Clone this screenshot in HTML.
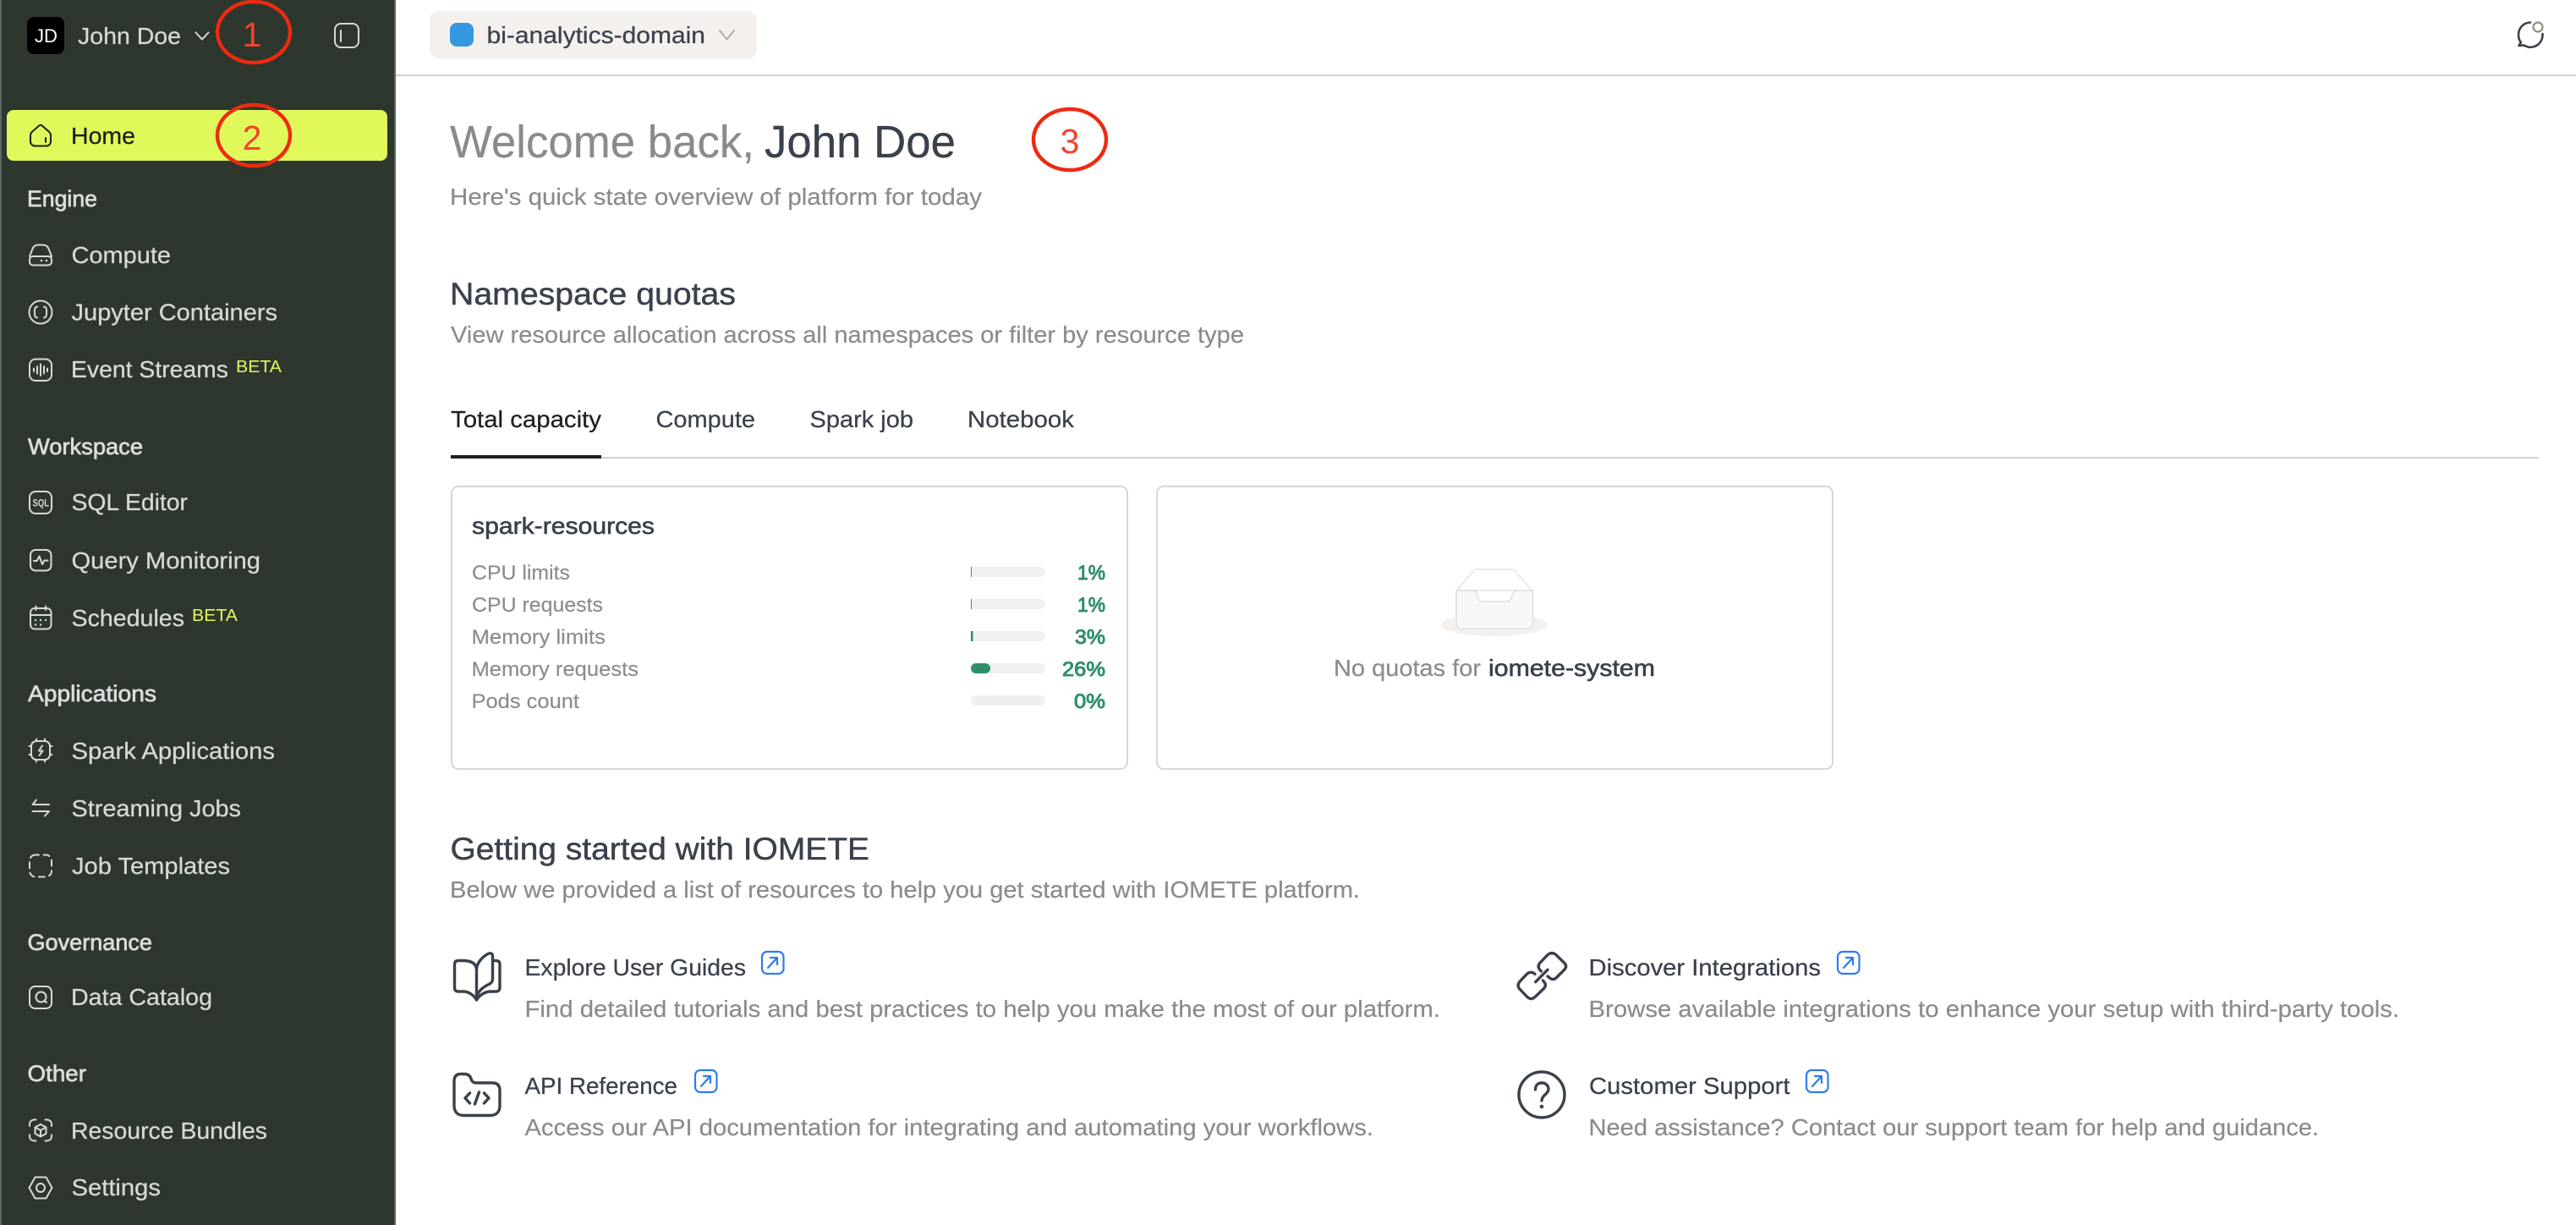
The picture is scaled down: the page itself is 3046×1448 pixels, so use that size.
<!DOCTYPE html>
<html lang="en">
<head>
<meta charset="utf-8">
<title>IOMETE Home</title>
<style>
html,body{margin:0;padding:0;background:#fff;width:3046px;height:1448px;overflow:hidden}
svg{display:block}
text{font-family:"Liberation Sans",sans-serif;white-space:pre}
.nav{font-size:28px;fill:#d9d9d9;stroke:#d9d9d9;stroke-width:.25px}
.sec{font-size:26.500px;fill:#dcdcdc;stroke:#dcdcdc;stroke-width:.7px}
.beta{font-size:20px;fill:#e1f85b}
.g{font-size:28px;fill:#8b8b8b;stroke:#8b8b8b;stroke-width:.2px}
.d{font-size:28px;fill:#3a414c;stroke:#3a414c;stroke-width:.25px}
.row{font-size:24.500px;fill:#8b8b8b;stroke:#8b8b8b;stroke-width:.15px}
.pct{font-size:24.500px;fill:#2f8f6b;stroke:#2f8f6b;stroke-width:1px}
.h2{font-size:37px;fill:#3a414c;stroke:#3a414c;stroke-width:.45px}
.ann{font-size:41px;fill:#f4432c;text-anchor:middle}
.ic{fill:none;stroke:#d9d9d9;stroke-width:2;stroke-linecap:round;stroke-linejoin:round}
.big{fill:none;stroke:#3a414c;stroke-width:3.400;stroke-linecap:round;stroke-linejoin:round}
.ext{fill:none;stroke:#2f7bf0;stroke-width:2.200;stroke-linecap:round;stroke-linejoin:round}
.circ{fill:none;stroke:#ee2a12;stroke-width:4.400}
</style>
</head>
<body>
<svg xmlns="http://www.w3.org/2000/svg" width="3046" height="1448" viewBox="0 0 3046 1448">
<rect width="3046" height="1448" fill="#ffffff"/>

<!-- sidebar -->
<rect x="0" y="0" width="468" height="1448" fill="#5a6a60"/>
<rect x="2" y="0" width="464" height="1448" fill="#2e372d"/>

<!-- top / divider -->
<rect x="468" y="88" width="2578" height="2" fill="#d0d0d0"/>

<!-- user -->
<rect x="32" y="20" width="44" height="44" rx="8" fill="#000"/>
<text x="41" y="50" font-size="22" fill="#fff" textLength="27" lengthAdjust="spacingAndGlyphs">JD</text>
<text x="92" y="52" class="nav" textLength="122" lengthAdjust="spacingAndGlyphs">John Doe</text>
<path class="ic" d="M231.500 38.500 L239 46.500 L246.500 38.500"/>
<rect class="ic" x="396" y="28" width="28" height="28" rx="7"/>
<path class="ic" d="M403 36 V49"/>

<!-- home -->
<rect x="8" y="130" width="450" height="60" rx="8" fill="#e1f85b"/>
<path fill="none" stroke="#1c1f1c" stroke-width="2" stroke-linecap="round" stroke-linejoin="round" d="M36 160 C36 158 37 156.500 38.500 155.200 L46 148.800 C47.200 147.800 48.800 147.800 50 148.800 L57.500 155.200 C59 156.500 60 158 60 160 V167 C60 170.300 57.800 172.500 54.500 172.500 H41.500 C38.200 172.500 36 170.300 36 167 Z"/>
<path fill="none" stroke="#1c1f1c" stroke-width="2" stroke-linecap="round" d="M54 163 V168"/>
<text x="84" y="170" font-size="28" fill="#1c1f1c" stroke="#1c1f1c" stroke-width=".25" textLength="76" lengthAdjust="spacingAndGlyphs">Home</text>

<!-- engine -->
<text x="32" y="244" class="sec" textLength="83" lengthAdjust="spacingAndGlyphs">Engine</text>
<path class="ic" d="M35 303 L38.500 294 C39.800 291 42 289.500 45 289.500 H51 C54 289.500 56.200 291 57.500 294 L61 303"/>
<rect class="ic" x="35" y="303" width="26" height="10.500" rx="4"/>
<circle cx="49" cy="308" r="1.300" fill="#d9d9d9"/><circle cx="55" cy="308" r="1.300" fill="#d9d9d9"/>
<text x="84.500" y="311" class="nav" textLength="117.500" lengthAdjust="spacingAndGlyphs">Compute</text>

<circle class="ic" cx="48" cy="369" r="13.500"/>
<path class="ic" d="M44 362.500 C41 363 41 365 41 369 C41 373 41 375 44 375.500 M52 362.500 C55 363 55 365 55 369 C55 373 55 375 52 375.500"/>
<text x="84.500" y="378.500" class="nav" textLength="243.500" lengthAdjust="spacingAndGlyphs">Jupyter Containers</text>

<rect class="ic" x="35" y="424.500" width="26" height="25.500" rx="7"/>
<path class="ic" d="M40 435.500 V439 M44 433 V441.500 M48 430.500 V444 M52 433 V441.500 M56 435.500 V439"/>
<text x="84" y="446" class="nav" textLength="186" lengthAdjust="spacingAndGlyphs">Event Streams</text>
<text x="279" y="440" class="beta" textLength="54" lengthAdjust="spacingAndGlyphs">BETA</text>

<!-- workspace -->
<text x="33" y="537" class="sec" textLength="136" lengthAdjust="spacingAndGlyphs">Workspace</text>
<rect class="ic" x="35" y="581" width="26" height="26" rx="7"/>
<text x="38.500" y="598.500" font-size="12" font-weight="bold" fill="#d9d9d9" textLength="19.500" lengthAdjust="spacingAndGlyphs">SQL</text>
<text x="84.500" y="603" class="nav" textLength="137.500" lengthAdjust="spacingAndGlyphs">SQL Editor</text>

<rect class="ic" x="36" y="650" width="24.500" height="24.500" rx="6"/>
<path class="ic" d="M40 663 H43.500 L46.500 657.500 L50 667 L52.500 662.500 H56.500"/>
<text x="84.500" y="672" class="nav" textLength="223.500" lengthAdjust="spacingAndGlyphs">Query Monitoring</text>

<rect class="ic" x="36" y="719" width="24.500" height="24.500" rx="5"/>
<path class="ic" d="M42.500 716.500 V721 M54 716.500 V721 M36 727 H60"/>
<circle cx="42" cy="733" r="1.200" fill="#d9d9d9"/><circle cx="48" cy="733" r="1.200" fill="#d9d9d9"/><circle cx="54" cy="733" r="1.200" fill="#d9d9d9"/>
<circle cx="42" cy="738.500" r="1.200" fill="#d9d9d9"/><circle cx="48" cy="738.500" r="1.200" fill="#d9d9d9"/>
<text x="84.500" y="740" class="nav" textLength="133.500" lengthAdjust="spacingAndGlyphs">Schedules</text>
<text x="227" y="734" class="beta" textLength="54" lengthAdjust="spacingAndGlyphs">BETA</text>

<!-- applications -->
<text x="33" y="829" class="sec" textLength="152" lengthAdjust="spacingAndGlyphs">Applications</text>
<rect class="ic" x="37" y="876" width="22" height="22" rx="6"/>
<path class="ic" d="M43 873.500 V876 M53 873.500 V876 M43 898 V900.500 M53 898 V900.500 M34.500 882 H37 M34.500 892 H37 M59 882 H61.500 M59 892 H61.500"/>
<path class="ic" d="M50 881.500 L46 887.500 H50.500 L46.500 893"/>
<text x="84.500" y="897" class="nav" textLength="240.500" lengthAdjust="spacingAndGlyphs">Spark Applications</text>

<path class="ic" stroke-width="2.400" d="M43 945.500 L38.500 951 H58 M38.500 959 H58 L53 964.500"/>
<text x="84.500" y="965" class="nav" textLength="200.500" lengthAdjust="spacingAndGlyphs">Streaming Jobs</text>

<rect class="ic" x="35" y="1010.500" width="26" height="26" rx="7" stroke-dasharray="7 5.500" stroke-dashoffset="3"/>
<text x="85" y="1033" class="nav" textLength="187" lengthAdjust="spacingAndGlyphs">Job Templates</text>

<!-- governance -->
<text x="32.500" y="1123" class="sec" textLength="147.500" lengthAdjust="spacingAndGlyphs">Governance</text>
<rect class="ic" x="35" y="1166" width="26" height="26" rx="6.500"/>
<circle class="ic" cx="48.500" cy="1178.500" r="6"/>
<path class="ic" d="M53 1183 L55 1185"/>
<text x="84" y="1188" class="nav" textLength="167" lengthAdjust="spacingAndGlyphs">Data Catalog</text>

<!-- other -->
<text x="32.500" y="1278" class="sec" textLength="69.500" lengthAdjust="spacingAndGlyphs">Other</text>
<path class="ic" d="M35 1331 V1329.500 C35 1325.500 37.500 1323.500 41 1323.500 H42.500 M53.500 1323.500 H55 C58.500 1323.500 61 1325.500 61 1329.500 V1331 M61 1341.500 V1343 C61 1346.500 58.500 1348.500 55 1348.500 H53.500 M42.500 1348.500 H41 C37.500 1348.500 35 1346.500 35 1343 V1341.500"/>
<path class="ic" d="M48 1329 L54.500 1332.500 V1340 L48 1343.500 L41.500 1340 V1332.500 Z M41.500 1332.500 L48 1336 L54.500 1332.500 M48 1336 V1343.500"/>
<text x="84" y="1346" class="nav" textLength="232" lengthAdjust="spacingAndGlyphs">Resource Bundles</text>

<path class="ic" d="M34.500 1404 L41.500 1391.500 H54.500 L61.500 1404 L54.500 1416.500 H41.500 Z"/>
<circle class="ic" cx="48" cy="1404" r="5"/>
<text x="84.500" y="1413" class="nav" textLength="105.500" lengthAdjust="spacingAndGlyphs">Settings</text>

<!-- namespace pill -->
<rect x="508" y="13" width="387" height="56" rx="10" fill="#f4f0ee"/>
<rect x="532" y="27" width="28" height="28" rx="8" fill="#3498e0"/>
<text x="575.500" y="51" class="d" textLength="258.500" lengthAdjust="spacingAndGlyphs">bi-analytics-domain</text>
<path fill="none" stroke="#a9a9a9" stroke-width="1.800" stroke-linecap="round" stroke-linejoin="round" d="M851 36 L859.500 46.500 L868 36"/>

<!-- chat icon -->
<path fill="none" stroke="#3a414c" stroke-width="2.600" stroke-linecap="round" stroke-linejoin="round" d="M2992 26.500 C2983 27 2978 34 2978 41 C2978 45 2979 48 2981 50 L2978.500 54 L2984.500 53.500 C2987 55 2989.500 55.800 2992 55.800 C3000 55.800 3007 49.500 3006.500 40"/>
<circle cx="3001" cy="32" r="5.500" fill="none" stroke="#8a9082" stroke-width="2.200"/>

<!-- welcome -->
<text x="532" y="186" font-size="54" fill="#8b8b8b" stroke="#8b8b8b" stroke-width=".2" textLength="360" lengthAdjust="spacingAndGlyphs">Welcome back,</text>
<text x="904" y="186" font-size="54" fill="#3a414c" stroke="#3a414c" stroke-width=".3" textLength="226" lengthAdjust="spacingAndGlyphs">John Doe</text>
<text x="532" y="242" class="g" textLength="629" lengthAdjust="spacingAndGlyphs">Here's quick state overview of platform for today</text>

<!-- namespace quotas -->
<text x="532" y="360" class="h2" textLength="338" lengthAdjust="spacingAndGlyphs">Namespace quotas</text>
<text x="533" y="405" class="g" textLength="938" lengthAdjust="spacingAndGlyphs">View resource allocation across all namespaces or filter by resource type</text>

<!-- tabs -->
<rect x="533" y="540" width="2469" height="2" fill="#d0d0d0"/>
<rect x="533" y="538" width="178" height="4" fill="#1f1f1f"/>
<text x="533" y="505" font-size="28" fill="#1f1f1f" stroke="#1f1f1f" stroke-width=".25" textLength="178" lengthAdjust="spacingAndGlyphs">Total capacity</text>
<text x="775.500" y="505" class="d" textLength="117.500" lengthAdjust="spacingAndGlyphs">Compute</text>
<text x="957.500" y="505" class="d" textLength="122.500" lengthAdjust="spacingAndGlyphs">Spark job</text>
<text x="1144" y="505" class="d" textLength="126" lengthAdjust="spacingAndGlyphs">Notebook</text>

<!-- card 1 -->
<rect x="534" y="575" width="799" height="334" rx="8" fill="#fff" stroke="#d3d3d3" stroke-width="1.800"/>
<text x="558" y="631" class="d" style="stroke-width:.6px" textLength="216" lengthAdjust="spacingAndGlyphs">spark-resources</text>

<text x="558" y="685" class="row" textLength="116" lengthAdjust="spacingAndGlyphs">CPU limits</text>
<text x="558" y="723" class="row" textLength="155" lengthAdjust="spacingAndGlyphs">CPU requests</text>
<text x="557.500" y="761" class="row" textLength="158.500" lengthAdjust="spacingAndGlyphs">Memory limits</text>
<text x="557.500" y="799" class="row" textLength="197.500" lengthAdjust="spacingAndGlyphs">Memory requests</text>
<text x="557.500" y="837" class="row" textLength="127.500" lengthAdjust="spacingAndGlyphs">Pods count</text>

<rect x="1148" y="670" width="88" height="12" rx="6" fill="#f0f0f0"/>
<rect x="1148" y="708" width="88" height="12" rx="6" fill="#f0f0f0"/>
<rect x="1148" y="746" width="88" height="12" rx="6" fill="#f0f0f0"/>
<rect x="1148" y="784" width="88" height="12" rx="6" fill="#f0f0f0"/>
<rect x="1148" y="822" width="88" height="12" rx="6" fill="#f0f0f0"/>
<rect x="1148" y="670" width="1" height="12" fill="#2f8f6b"/>
<rect x="1148" y="708" width="1" height="12" fill="#2f8f6b"/>
<rect x="1148" y="746" width="2.500" height="12" fill="#2f8f6b"/>
<rect x="1148" y="784" width="23" height="12" rx="6" fill="#2f8f6b"/>

<text x="1274" y="685" class="pct" textLength="33" lengthAdjust="spacingAndGlyphs">1%</text>
<text x="1274" y="723" class="pct" textLength="33" lengthAdjust="spacingAndGlyphs">1%</text>
<text x="1271" y="761" class="pct" textLength="36" lengthAdjust="spacingAndGlyphs">3%</text>
<text x="1256" y="799" class="pct" textLength="51" lengthAdjust="spacingAndGlyphs">26%</text>
<text x="1270" y="837" class="pct" textLength="37" lengthAdjust="spacingAndGlyphs">0%</text>

<!-- card 2 -->
<rect x="1368" y="575" width="799" height="334" rx="8" fill="#fff" stroke="#d3d3d3" stroke-width="1.800"/>
<ellipse cx="1767" cy="738.500" rx="63" ry="13.500" fill="#f4f0ee"/>
<path fill="#fff" stroke="#e2e2e2" stroke-width="1.400" stroke-linejoin="round" d="M1722.500 698 L1742 675 Q1743.500 673 1746 673 H1787 Q1789.500 673 1791 675 L1812 698 Z"/>
<path fill="#f8f8f8" stroke="#e0e0e0" stroke-width="1.600" stroke-linejoin="round" d="M1722 698 H1740 Q1746 698 1747 704 Q1748 711 1754 711 H1781 Q1787 711 1788 704 Q1789 698 1795 698 H1812.500 V736 Q1812.500 743 1806 743 H1729 Q1722 743 1722 736 Z"/>
<text x="1577" y="799" class="g" textLength="174" lengthAdjust="spacingAndGlyphs">No quotas for</text>
<text x="1760" y="799" class="d" style="stroke-width:.6px" textLength="197" lengthAdjust="spacingAndGlyphs">iomete-system</text>

<!-- getting started -->
<text x="532.500" y="1016" class="h2" textLength="495.500" lengthAdjust="spacingAndGlyphs">Getting started with IOMETE</text>
<text x="532" y="1061" class="g" textLength="1076" lengthAdjust="spacingAndGlyphs">Below we provided a list of resources to help you get started with IOMETE platform.</text>

<!-- book -->
<path class="big" d="M563.500 1146 V1178 M563.500 1146 C563 1138 556 1135.500 547 1135.500 H542 C539 1135.500 537.500 1137 537.500 1140 V1167 C537.500 1170.500 539 1172 542 1172 H548 C554 1172 560 1176 563.500 1182 C567 1176 574 1172 580 1172 H586 C589.500 1172 591 1170.500 591 1167 V1140 C591 1137 589.500 1135.500 586 1135.500 H583"/>
<path class="big" d="M563.500 1146 C563.500 1139 570 1131 577 1127.500 C580 1126 582.500 1127 582.500 1130 V1157 C582.500 1160 581.500 1161.500 579 1163 C572 1166 566 1171 563.500 1178"/>
<text x="620.500" y="1153" class="d" textLength="261.500" lengthAdjust="spacingAndGlyphs">Explore User Guides</text>
<rect class="ext" x="901" y="1125" width="25.500" height="26" rx="6"/>
<path class="ext" d="M908 1144 L919 1132 M911 1132 H919 V1140"/>
<text x="620.500" y="1202" class="g" textLength="1082.500" lengthAdjust="spacingAndGlyphs">Find detailed tutorials and best practices to help you make the most of our platform.</text>

<!-- folder code -->
<path class="big" d="M537 1278 C537 1272 540 1269.500 545 1269.500 H549 C554 1269.500 556 1272 557 1275 C558 1279 560 1280 563 1280 H582 C588 1280 591 1283 591 1289 V1307 C591 1314 587 1318.500 580 1318.500 H548 C541 1318.500 537 1314 537 1307 Z"/>
<path class="big" stroke-width="3" d="M555.500 1292 L550 1298 L555.500 1304 M572.500 1292 L578 1298 L572.500 1304 M566.500 1291 L561.500 1305"/>
<text x="620.500" y="1293" class="d" textLength="180.500" lengthAdjust="spacingAndGlyphs">API Reference</text>
<rect class="ext" x="822" y="1265" width="25.500" height="26" rx="6"/>
<path class="ext" d="M829 1284 L840 1272 M832 1272 H840 V1280"/>
<text x="620.500" y="1342" class="g" textLength="1003.500" lengthAdjust="spacingAndGlyphs">Access our API documentation for integrating and automating your workflows.</text>

<!-- link -->
<path class="big" d="M1822.300 1148 L1820.500 1146 Q1817.500 1142 1821 1138 L1830 1128.700 Q1835 1124.500 1840 1128.700 L1850 1138.500 Q1853.500 1142.500 1849.500 1146.500 L1840 1156 Q1836.500 1159 1832.500 1156 L1830 1154"/>
<path class="big" d="M1815 1151.300 L1813 1150 Q1808.500 1148 1805 1151.800 L1796.800 1160.500 Q1793.500 1165 1796.800 1169 L1806 1178.500 Q1810.500 1182.500 1815 1178.500 L1825.500 1168.500 Q1829 1164.500 1826 1161 L1824.500 1159"/>
<path class="big" d="M1815.700 1160.700 L1830 1146.300"/>
<text x="1878.500" y="1153" class="d" textLength="274.500" lengthAdjust="spacingAndGlyphs">Discover Integrations</text>
<rect class="ext" x="2173" y="1125" width="25.500" height="26" rx="6"/>
<path class="ext" d="M2180 1144 L2191 1132 M2183 1132 H2191 V1140"/>
<text x="1878.500" y="1202" class="g" textLength="958.500" lengthAdjust="spacingAndGlyphs">Browse available integrations to enhance your setup with third-party tools.</text>

<!-- question -->
<circle class="big" cx="1823" cy="1294" r="27"/>
<path class="big" stroke-width="3" d="M1815.500 1288 C1815.500 1283 1818.500 1280 1823 1280 C1827.500 1280 1831 1283 1831 1287.500 C1831 1293 1823.500 1294 1823 1301"/>
<circle cx="1823" cy="1308" r="2.300" fill="#3a414c"/>
<text x="1879" y="1293" class="d" textLength="237.500" lengthAdjust="spacingAndGlyphs">Customer Support</text>
<rect class="ext" x="2136" y="1265" width="25.500" height="26" rx="6"/>
<path class="ext" d="M2143 1284 L2154 1272 M2146 1272 H2154 V1280"/>
<text x="1878.500" y="1342" class="g" textLength="863.500" lengthAdjust="spacingAndGlyphs">Need assistance? Contact our support team for help and guidance.</text>

<!-- annotations -->
<ellipse class="circ" cx="300" cy="38" rx="43" ry="36"/>
<text x="298" y="55" class="ann">1</text>
<ellipse class="circ" cx="300" cy="160" rx="43" ry="36"/>
<text x="298" y="177" class="ann">2</text>
<ellipse class="circ" cx="1265" cy="165" rx="43" ry="36"/>
<text x="1265" y="181" class="ann">3</text>
</svg>
</body>
</html>
